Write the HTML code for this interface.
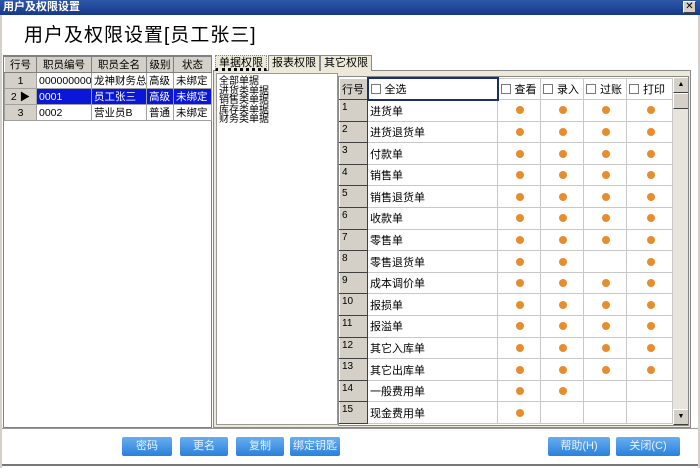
<!DOCTYPE html>
<html><head><meta charset="utf-8"><style>
*{box-sizing:border-box;margin:0;padding:0}
body{width:700px;height:468px;overflow:hidden;background:#ece9d8;font-family:"Liberation Sans","Noto Sans CJK SC",sans-serif;font-size:11px;color:#000;position:relative}
.abs{position:absolute}
#tb{left:0;top:0;width:700px;height:15px;background:linear-gradient(#2f57a8,#17388a);color:#fff;font-weight:bold;font-size:11px;line-height:15px;padding-left:3px}
#x{right:4px;top:1px;width:13px;height:12px;background:#d4d0c8;border:1px solid #fff;border-right-color:#404040;border-bottom-color:#404040;color:#000;font-size:10px;line-height:10px;text-align:center}
#win{left:0;top:15px;width:700px;height:453px;background:#fff;border-left:2px solid #d4d0c8;border-right:2px solid #d4d0c8}
h1{position:absolute;left:24px;top:20px;font-size:19px;font-weight:normal;letter-spacing:1px}
table{border-collapse:collapse;table-layout:fixed}
td{overflow:hidden;white-space:nowrap}
#lt td{height:16px;border:1px solid #a0a0a0;padding:0 2px;font-size:10.5px}
#lt .h td{background:#d4d0c8;text-align:center;border-color:#808080 #808080 #808080 #fff}
#lt .n{background:#d4d0c8;text-align:center}
.sel td{background:#0a16d8;color:#fff}
.tab{top:55px;height:16px;background:#ece9d8;border:1px solid #888;border-bottom:none;font-size:11px;line-height:15px;padding:0 3px}
#g td{height:21.6px;border:1px solid #c8c8c8;font-size:11px;padding-left:2px}
#g .n{background:#d4d0c8;border-color:#fff #404040 #404040 #fff;font-size:10px;vertical-align:top;padding-top:2px}
.d{display:block;margin:auto;width:8px;height:8px;border-radius:50%;background:#e88d2e}
.cb{display:inline-block;width:10px;height:10px;border:1px solid #777;background:#fff;vertical-align:-1px;margin-right:4px}
.btn{top:437px;height:19px;background:linear-gradient(#67aef0,#2a80dc);border-radius:2px;color:#e8f2ff;font-size:11px;text-align:center;line-height:19px}
</style></head><body>
<div id="tb" class="abs">用户及权限设置</div>
<div id="x" class="abs">✕</div>
<div id="win" class="abs"></div>
<h1>用户及权限设置[员工张三]</h1>
<div class="abs" style="left:3px;top:55px;width:209px;height:373px;border:1px solid #808080;background:#fff">
<table id="lt" style="width:207px">
<col style="width:32px"><col style="width:55px"><col style="width:55px"><col style="width:27px"><col style="width:38px">
<tr class="h"><td>行号</td><td>职员编号</td><td>职员全名</td><td>级别</td><td>状态</td></tr>
<tr><td class="n">1</td><td>000000000</td><td>龙神财务总</td><td>高级</td><td>未绑定</td></tr>
<tr class="sel"><td class="n" style="background:#d4d0c8;color:#000">2 ▶</td><td>0001</td><td>员工张三</td><td>高级</td><td>未绑定</td></tr>
<tr><td class="n">3</td><td>0002</td><td>营业员B</td><td>普通</td><td>未绑定</td></tr>
</table></div>
<div class="abs" style="left:213px;top:70px;width:478px;height:358px;border:1px solid #888;background:#ece9d8"></div>
<div class="abs tab" style="left:215px;border-style:dotted">单据权限</div>
<div class="abs tab" style="left:268px">报表权限</div>
<div class="abs tab" style="left:320px">其它权限</div>
<div class="abs" style="left:216px;top:73px;width:122px;height:352px;background:#fff;border:1px solid #999;font-size:10px;line-height:9.5px;padding:3px 0 0 2px">全部单据<br>进货类单据<br>销售类单据<br>库存类单据<br>财务类单据</div>
<div class="abs" style="left:338px;top:76px;width:351px;height:350px;background:#fff;border:1px solid #888;overflow:hidden">
<table id="g" style="width:333px">
<col style="width:28px"><col style="width:130px"><col style="width:43px"><col style="width:43px"><col style="width:43px"><col style="width:46px">
<tr><td class="n" style="font-size:11px">行号</td><td style="border:2px solid #1c2f6a"><span class="cb"></span>全选</td><td><span class="cb"></span>查看</td><td><span class="cb"></span>录入</td><td><span class="cb"></span>过账</td><td><span class="cb"></span>打印</td></tr>
<tr><td class="n">1</td><td>进货单</td><td><i class="d"></i></td><td><i class="d"></i></td><td><i class="d"></i></td><td><i class="d"></i></td></tr>
<tr><td class="n">2</td><td>进货退货单</td><td><i class="d"></i></td><td><i class="d"></i></td><td><i class="d"></i></td><td><i class="d"></i></td></tr>
<tr><td class="n">3</td><td>付款单</td><td><i class="d"></i></td><td><i class="d"></i></td><td><i class="d"></i></td><td><i class="d"></i></td></tr>
<tr><td class="n">4</td><td>销售单</td><td><i class="d"></i></td><td><i class="d"></i></td><td><i class="d"></i></td><td><i class="d"></i></td></tr>
<tr><td class="n">5</td><td>销售退货单</td><td><i class="d"></i></td><td><i class="d"></i></td><td><i class="d"></i></td><td><i class="d"></i></td></tr>
<tr><td class="n">6</td><td>收款单</td><td><i class="d"></i></td><td><i class="d"></i></td><td><i class="d"></i></td><td><i class="d"></i></td></tr>
<tr><td class="n">7</td><td>零售单</td><td><i class="d"></i></td><td><i class="d"></i></td><td><i class="d"></i></td><td><i class="d"></i></td></tr>
<tr><td class="n">8</td><td>零售退货单</td><td><i class="d"></i></td><td><i class="d"></i></td><td></td><td><i class="d"></i></td></tr>
<tr><td class="n">9</td><td>成本调价单</td><td><i class="d"></i></td><td><i class="d"></i></td><td><i class="d"></i></td><td><i class="d"></i></td></tr>
<tr><td class="n">10</td><td>报损单</td><td><i class="d"></i></td><td><i class="d"></i></td><td><i class="d"></i></td><td><i class="d"></i></td></tr>
<tr><td class="n">11</td><td>报溢单</td><td><i class="d"></i></td><td><i class="d"></i></td><td><i class="d"></i></td><td><i class="d"></i></td></tr>
<tr><td class="n">12</td><td>其它入库单</td><td><i class="d"></i></td><td><i class="d"></i></td><td><i class="d"></i></td><td><i class="d"></i></td></tr>
<tr><td class="n">13</td><td>其它出库单</td><td><i class="d"></i></td><td><i class="d"></i></td><td><i class="d"></i></td><td><i class="d"></i></td></tr>
<tr><td class="n">14</td><td>一般费用单</td><td><i class="d"></i></td><td><i class="d"></i></td><td></td><td></td></tr>
<tr><td class="n">15</td><td>现金费用单</td><td><i class="d"></i></td><td></td><td></td><td></td></tr>
</table>
<div class="abs" style="left:334px;top:0;width:16px;height:348px;background:#e6e4dc">
<div style="height:16px;background:#d4d0c8;border:1px solid #fff;border-right-color:#404040;border-bottom-color:#404040;font-size:7px;text-align:center;line-height:14px">▲</div>
<div style="height:16px;background:#d4d0c8;border:1px solid #fff;border-right-color:#404040;border-bottom-color:#404040"></div>
<div class="abs" style="bottom:0;width:16px;height:16px;background:#d4d0c8;border:1px solid #fff;border-right-color:#404040;border-bottom-color:#404040;font-size:7px;text-align:center;line-height:14px">▼</div>
</div></div>
<div class="abs" style="left:2px;top:428px;width:696px;height:38px;border-top:1px solid #999;border-bottom:2px solid #777;background:#fff"></div>
<div class="abs btn" style="left:122px;width:50px">密码</div>
<div class="abs btn" style="left:180px;width:48px">更名</div>
<div class="abs btn" style="left:236px;width:48px">复制</div>
<div class="abs btn" style="left:290px;width:50px">绑定钥匙</div>
<div class="abs btn" style="left:548px;width:62px">帮助(H)</div>
<div class="abs btn" style="left:616px;width:64px">关闭(C)</div>
</body></html>
